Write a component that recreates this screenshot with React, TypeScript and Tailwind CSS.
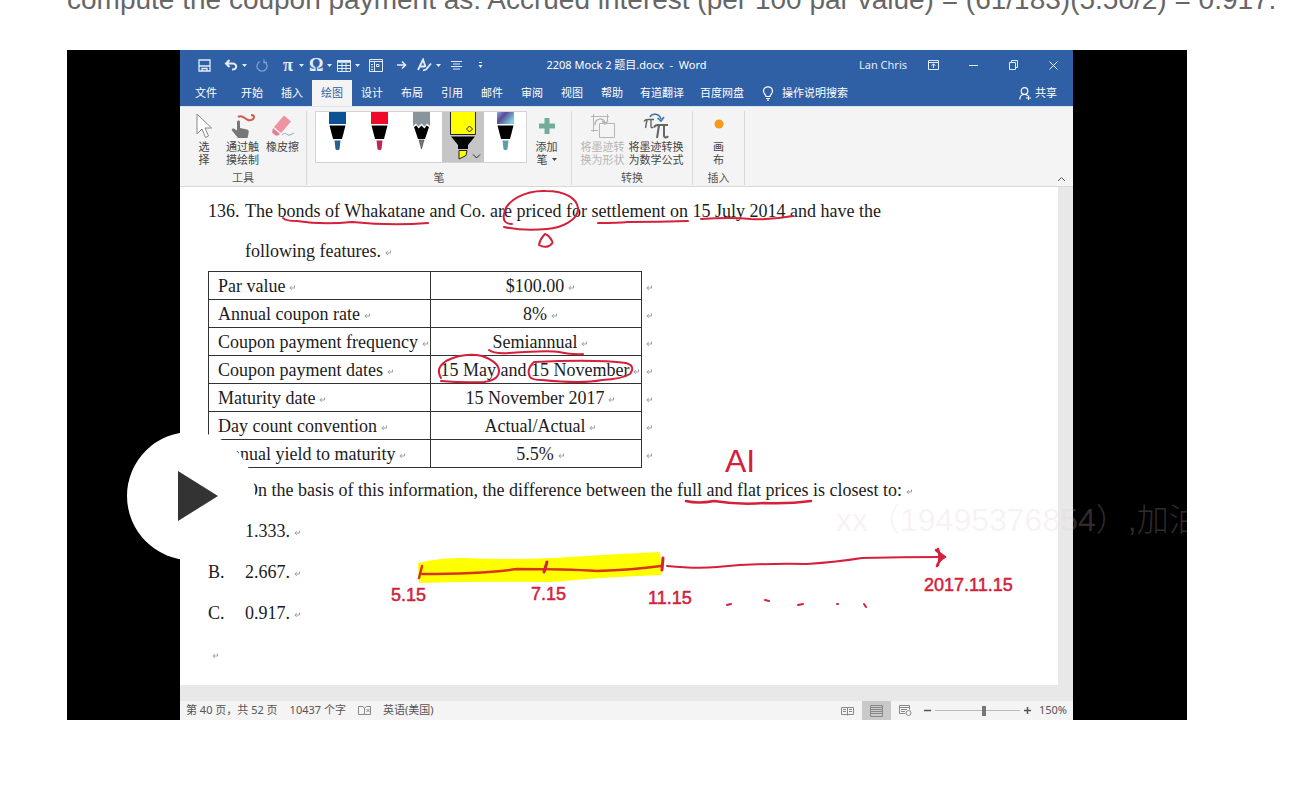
import type { ReactNode } from "react";
import clsx from "clsx";

const TABS = ["开始", "插入", "绘图", "设计", "布局", "引用", "邮件", "审阅", "视图", "帮助"];
const ADDIN_TABS = ["有道翻译", "百度网盘"];

const FEATURES = [
    ["Par value", "$100.00"],
    ["Annual coupon rate", "8%"],
    ["Coupon payment frequency", "Semiannual"],
    ["Coupon payment dates", "15 May and 15 November"],
    ["Maturity date", "15 November 2017"],
    ["Day count convention", "Actual/Actual"],
    ["Annual yield to maturity", "5.5%"],
];

const OPTIONS = [
    ["A.", "1.333."],
    ["B.", "2.667."],
    ["C.", "0.917."],
];

function Caret() {
    return (
        <svg width="5" height="3" viewBox="0 0 5 3" fill="currentColor" aria-hidden="true">
            <path d="M0 0h5L2.5 3z" />
        </svg>
    );
}

function ParagraphMark() {
    return (
        <svg
            width="6"
            height="6"
            viewBox="0 0 6 6"
            fill="none"
            stroke="#a0a0a0"
            aria-hidden="true"
            className="ml-1 inline-block"
        >
            <path d="M5.500 0.500v2.500h-4.500M2.800 1.200L0.800 3l2 1.800" />
        </svg>
    );
}

function ToolButton({
    label,
    className,
    caret,
    children,
}: {
    label: string;
    className: string;
    caret?: boolean;
    children: ReactNode;
}) {
    return (
        <button aria-label={label} className={clsx("flex h-5 items-center gap-1", className)}>
            {children}
            {caret && <Caret />}
        </button>
    );
}

function TitleBar() {
    return (
        <div className="flex h-[30px] items-center text-white">
            <div className="flex flex-1 items-center text-[#e3edf9]">
                <ToolButton label="保存" className="ml-[18px] w-[26px]">
                    <svg width="13" height="13" viewBox="0 0 13 13" fill="none" stroke="currentColor" strokeWidth="1.300">
                        <path d="M1 1h11v11H1zM1 7h11M4 12V9.500h5V12" />
                    </svg>
                </ToolButton>
                <ToolButton label="撤消" className="w-8" caret>
                    <svg width="14" height="12" viewBox="0 0 14 12" fill="none" stroke="currentColor" strokeWidth="2">
                        <path d="M5.500 1L2 4.500 5.500 8M2 4.500h6.500c5 0 5 6-0.500 6" />
                    </svg>
                </ToolButton>
                <ToolButton label="恢复" className="w-[25px] text-[#7f9fce]">
                    <svg width="12" height="13" viewBox="0 0 12 13" fill="none" stroke="currentColor" strokeWidth="1.300">
                        <path d="M8 2.500a5 5 0 1 1-4 0M8 0.500v3h3" />
                    </svg>
                </ToolButton>
                <ToolButton label="公式" className="w-7" caret>
                    <span className="w-[14px] font-['Liberation_Serif',serif] text-[18px] leading-5 font-bold">π</span>
                </ToolButton>
                <ToolButton label="符号" className="w-7" caret>
                    <span className="w-[14px] font-['Liberation_Serif',serif] text-[18px] leading-5 font-bold">Ω</span>
                </ToolButton>
                <ToolButton label="表格" className="w-8" caret>
                    <svg width="14" height="13" viewBox="0 0 14 13" fill="none" stroke="currentColor">
                        <path d="M0.500 1.500h13v11H0.500zM0.500 6.500h13M0.500 9.500h13M5 4v8.500M9 4v8.500" />
                        <path d="M0.500 2.500h13" strokeWidth="2.500" />
                    </svg>
                </ToolButton>
                <ToolButton label="窗格" className="w-[27px]">
                    <svg width="14" height="13" viewBox="0 0 14 13" fill="none" stroke="currentColor">
                        <path d="M0.500 0.500h13v12H0.500zM0.500 2.500h13M5.500 3v9.500M2 5.500h2M2 8h2M2 10.500h2M7.500 5.500h2.500v2H7.500z" />
                    </svg>
                </ToolButton>
                <ToolButton label="下一处" className="w-[21px]">
                    <svg width="11" height="10" viewBox="0 0 11 10" fill="none" stroke="currentColor" strokeWidth="1.600">
                        <path d="M1 5h8.500M6 1.500L9.500 5 6 8.500" />
                    </svg>
                </ToolButton>
                <ToolButton label="文本效果" className="w-[33px]" caret>
                    <svg width="15" height="14" viewBox="0 0 15 14" fill="none" stroke="currentColor" strokeWidth="1.800">
                        <path d="M1 12L6 1.500 8.500 9M3 8.500h5M6 12.500l3-1 5-6" />
                    </svg>
                </ToolButton>
                <ToolButton label="居中" className="w-7">
                    <svg width="13" height="10" viewBox="0 0 13 10" fill="none" stroke="currentColor">
                        <path d="M1 1.500h11M3 4h7M1 6.500h11M3 9h7" />
                    </svg>
                </ToolButton>
                <ToolButton label="自定义快速访问工具栏" className="w-2">
                    <svg width="5" height="6" viewBox="0 0 5 6" fill="currentColor">
                        <path d="M1 0h3v1H1zM0.500 3h4l-2 3z" />
                    </svg>
                </ToolButton>
            </div>
            <h1 className="text-[11px] whitespace-pre">2208 Mock 2 题目.docx  -  Word</h1>
            <div className="flex flex-1 items-center justify-end text-[#e3edf9]">
                <span className="mr-1.5 text-[11px]">Lan Chris</span>
                <button aria-label="功能区显示选项" className="flex h-5 w-10 items-center justify-center">
                    <svg width="11" height="10" viewBox="0 0 11 10" fill="none" stroke="currentColor">
                        <path d="M0.500 0.500h10v9H0.500zM0.500 2.500h10M5.500 8V4M3.500 5.500l2-1.500 2 1.500" />
                    </svg>
                </button>
                <button aria-label="最小化" className="flex h-5 w-10 items-center justify-center">
                    <svg width="9" height="1" viewBox="0 0 9 1" fill="currentColor">
                        <path d="M0 0h9v1H0z" />
                    </svg>
                </button>
                <button aria-label="还原" className="flex h-5 w-10 items-center justify-center">
                    <svg width="9" height="10" viewBox="0 0 9 10" fill="none" stroke="currentColor">
                        <path d="M0.500 2.500h6v7h-6zM2.500 2.500v-2h6v7h-2" />
                    </svg>
                </button>
                <button aria-label="关闭" className="flex h-5 w-10 items-center justify-center">
                    <svg width="9" height="9" viewBox="0 0 9 9" fill="none" stroke="currentColor">
                        <path d="M0.500 0.500l8 8M8.500 0.500l-8 8" />
                    </svg>
                </button>
            </div>
        </div>
    );
}

function TabBar() {
    return (
        <nav className="flex h-[27px] items-stretch border-b border-[#dbe5f2] pl-1.5 text-[11px] text-white">
            <button className="mr-1.5 px-[9px]">文件</button>
            {TABS.map((tab) => (
                <button key={tab} className={clsx("px-[9px]", tab === "绘图" && "bg-[#f4f4f4] text-[#2f5fa5]")}>
                    {tab}
                </button>
            ))}
            {ADDIN_TABS.map((tab) => (
                <button key={tab} className="px-2">
                    {tab}
                </button>
            ))}
            <button className="ml-2.5 flex items-center gap-2">
                <svg width="12" height="15" viewBox="0 0 12 15" fill="none" stroke="currentColor" strokeWidth="1.200">
                    <path d="M4 10.500C4 8.500 1.500 8 1.500 5a4.500 4.200 0 0 1 9 0c0 3-2.500 3.500-2.500 5.500zM4 12.500h4M5 14.200h2" />
                </svg>
                操作说明搜索
            </button>
            <button className="mr-4 ml-auto flex items-center gap-1">
                <svg width="12" height="13" viewBox="0 0 12 13" fill="none" stroke="currentColor" strokeWidth="1.200">
                    <circle cx="5.500" cy="4" r="3.300" />
                    <path d="M0.800 12.500c0-3.500 2-5 4.700-5 1.500 0 2.500 0.500 3.200 1.200M7 11h5M9.500 8.500v5" />
                </svg>
                共享
            </button>
        </nav>
    );
}

function Pen({ color, tip }: { color: string; tip: string }) {
    return (
        <svg width="42" height="50" viewBox="0 0 42 50" aria-hidden="true">
            <path d="M13 0h17v12H13z" fill={color} />
            <path d="M13.500 13.500h16L26 27h-9z" fill="#000" />
            <path d="M18.500 28.500h6l-1 8.500c-0.500 1.500-3.500 1.500-4 0z" fill={tip} />
        </svg>
    );
}

function PenGallery() {
    return (
        <div className="flex h-[52px] border border-[#d4d4d4] bg-white">
            <button aria-label="蓝色笔">
                <Pen color="#0b5394" tip="#24608f" />
            </button>
            <button aria-label="红色笔">
                <Pen color="#ee0a28" tip="#c2264d" />
            </button>
            <button aria-label="铅笔">
                <svg width="42" height="50" viewBox="0 0 42 50" aria-hidden="true">
                    <path d="M13 0h17v14l-3-2.500-2.500 3-3-3-3 3-2.500-3L13 14z" fill="#8a949b" />
                    <path d="M14 15l2.500-1.500 2 3 3-3 3 3 2-3L29 15l-4 12h-7z" fill="#000" />
                    <path d="M19 28h5l-2.500 9z" fill="#777" stroke="#333" strokeWidth="0.500" />
                </svg>
            </button>
            <button aria-label="荧光笔" className="bg-[#c6c6c6]">
                <svg width="42" height="50" viewBox="0 0 42 50" aria-hidden="true">
                    <path d="M8.500 0v22.500h25V0" fill="#ffff00" stroke="#222" />
                    <path d="M9 24.500h24l-7 8.500v4H16v-4z" fill="#000" />
                    <path d="M17 38.500h8l-1 5-7 3.500z" fill="#ffff00" stroke="#222" />
                    <path d="M27.500 14l3 3-3 3-3-3zM31 42.500l3.500 3.500 3.500-3.500" fill="none" stroke="#222" />
                </svg>
            </button>
            <button aria-label="星系笔">
                <svg width="42" height="50" viewBox="0 0 42 50" aria-hidden="true">
                    <defs>
                        <linearGradient id="galaxy" x1="0" y1="0" x2="1" y2="0.600">
                            <stop offset="0" stopColor="#7ab8d8" />
                            <stop offset="0.400" stopColor="#5a4a98" />
                            <stop offset="1" stopColor="#7fd0e0" />
                        </linearGradient>
                    </defs>
                    <path d="M13 0h17v12H13z" fill="url(#galaxy)" />
                    <path d="M13.500 13.500h16L26 27h-9z" fill="#000" />
                    <path d="M18.500 28.500h6l-1 8.500c-0.500 1.500-3.500 1.500-4 0z" fill="#5f9ea8" />
                </svg>
            </button>
        </div>
    );
}

function RibbonButton({ lines, disabled, children }: { lines: ReactNode[]; disabled?: boolean; children: ReactNode }) {
    return (
        <button
            disabled={disabled}
            className={clsx("flex flex-col items-center", disabled ? "text-[#b4b4b4]" : "text-[#444]")}
        >
            <span className="flex h-[29px] items-center">{children}</span>
            {lines.map((line, i) => (
                <span key={i} className="flex items-center gap-1 whitespace-nowrap">
                    {line}
                </span>
            ))}
        </button>
    );
}

function RibbonGroup({ name, className, children }: { name: string; className: string; children: ReactNode }) {
    return (
        <section className={clsx("mt-1 mb-px flex flex-col justify-between border-r border-[#d8d8d8]", className)}>
            <div className="flex h-14 items-start justify-center">{children}</div>
            <h2 className="text-center leading-[15px] text-[#555]">{name}</h2>
        </section>
    );
}

function Ribbon() {
    return (
        <div className="flex h-20 border-b border-[#d8d8d8] bg-[#f4f4f4] text-[11px] leading-[13px]">
            <RibbonGroup name="工具" className="w-[127px]">
                <div className="flex items-start gap-[7px] pl-2">
                    <div className="w-6">
                        <RibbonButton lines={["选", "择"]}>
                            <svg width="18" height="26" viewBox="0 0 18 26" fill="#fff" stroke="#888">
                                <path d="M2 1v20l5-5 3.500 8.500 3-1.500-3.500-8h6.500z" />
                            </svg>
                        </RibbonButton>
                    </div>
                    <RibbonButton lines={["通过触", "摸绘制"]}>
                        <svg width="26" height="26" viewBox="0 0 26 26">
                            <path
                                d="M7 9c0-2 3-2 3 0v6l7 1.500c2 0.500 2 2 1.500 4l-1 4.500H8L2 17.500c-1-1.500 1-2.500 2.500-1.500L7 17.500z"
                                fill="#777"
                            />
                            <path
                                d="M8 4c4-3 7 2 10 3s6-1 6-3-2-2-3-2"
                                fill="none"
                                stroke="#cf5846"
                                strokeWidth="2"
                            />
                        </svg>
                    </RibbonButton>
                    <RibbonButton lines={["橡皮擦"]}>
                        <svg width="26" height="26" viewBox="0 0 26 26">
                            <path d="M14 2.500l7 6L11 20l-7-6z" fill="#ec92a0" />
                            <path d="M3 15l7 6-2 1.500H5.500L2 19.500z" fill="#e57f90" />
                            <path d="M12 22c4-4 5 1 8 0l4-2" fill="none" stroke="#8fa7c4" />
                        </svg>
                    </RibbonButton>
                </div>
            </RibbonGroup>
            <RibbonGroup name="笔" className="w-[265px]">
                <div className="flex items-start gap-[9px] pr-1.5">
                    <PenGallery />
                    <RibbonButton
                        lines={[
                            "添加",
                            <>
                                笔 <Caret />
                            </>,
                        ]}
                    >
                        <svg width="18" height="18" viewBox="0 0 18 18" fill="#72ae97">
                            <path d="M6.500 1h5v5.500H17v5h-5.500V17h-5v-5.500H1v-5h5.500z" />
                        </svg>
                    </RibbonButton>
                </div>
            </RibbonGroup>
            <RibbonGroup name="转换" className="w-[121px]">
                <div className="flex gap-1">
                    <RibbonButton lines={["将墨迹转", "换为形状"]} disabled>
                        <svg width="26" height="26" viewBox="0 0 26 26" fill="none" stroke="#b4b4b4">
                            <path d="M1 3.500h18M3.500 1v18M17.500 1v7M1 17.500h7M9.500 10.500h15v14h-15z" />
                            <path d="M5 12c0-7 9-8 10-2M12 8l3 3 3-3" strokeWidth="1.500" />
                        </svg>
                    </RibbonButton>
                    <RibbonButton lines={["将墨迹转换", "为数学公式"]}>
                        <svg width="28" height="28" viewBox="0 0 28 28" fill="none">
                            <path d="M2 9.500c1-2 2-2 4-2h6M5 8l-1.500 8M9 8v6.500c0 1.500 1.500 1.500 2 0.500" stroke="#666" strokeWidth="1.400" />
                            <path d="M12 15.500c1-2.500 2-2.500 4-2.500h10M17 13.500L15 26M22 13v10.500c0 2.500 3 2.500 4 0.500" stroke="#666" strokeWidth="2" />
                            <path d="M8 5c2-4 9-4 11 2M15.500 6l3.500 3 3-4" stroke="#3f75ad" strokeWidth="1.600" />
                        </svg>
                    </RibbonButton>
                </div>
            </RibbonGroup>
            <RibbonGroup name="插入" className="w-[52px]">
                <RibbonButton lines={["画", "布"]}>
                    <svg width="10" height="14" viewBox="0 0 10 14">
                        <circle cx="5" cy="5" r="4.500" fill="#f79a1c" />
                    </svg>
                </RibbonButton>
            </RibbonGroup>
            <button aria-label="折叠功能区" className="mt-auto mr-[7px] mb-1 ml-auto">
                <svg width="9" height="6" viewBox="0 0 9 6" fill="none" stroke="#555">
                    <path d="M1 5l3.500-3.500L8 5" />
                </svg>
            </button>
        </div>
    );
}

// Pen strokes laid over the page
function InkLayer() {
    return (
        <svg
            width="893"
            height="498"
            viewBox="180 187 893 498"
            fill="none"
            stroke="#d4203a"
            strokeWidth="2"
            strokeLinecap="round"
            strokeLinejoin="round"
            className="pointer-events-none absolute top-0 left-0"
        >
            <path
                d="M418 563q20-5 45-5q45 2 90 0q60-4 107-6l2 23q-60 2-110 7q-70-1-133 1z"
                fill="#ffff00"
                stroke="none"
            />
            <path d="M283 218q2 3 14 3q25 4 55 1q40 4 76 1" />
            <path d="M512 224q-10 0-8-10c2-14 22-24 42-23c20 0 31 8 32 17c1 12-17 20-31 21q-25 2-43-2" />
            <path d="M545 234q-5 5-6 11q5 3 10 1q5-3 3-5q-3-6-7-7" />
            <path d="M598 223q20 0 30-1q30 0 60-1" />
            <path d="M701 219q30-2 50 0q20 1 42-3" />
            <path d="M489 350q5 4 20 3q40-3 50-1q15 3 24 2" />
            <path d="M441 378q-6-10 5-17q18-9 36-5q17 6 17 15q0 9-15 11q-20 1-43-1" />
            <path d="M533 363q-7 7-3 14q2 3 12 3q40 4 60 0q20-1 28-6q6-8-4-11q-30-4-92-1" />
            <path d="M686 501q12 3 28 0q25 4 50 2q25 1 47-2" strokeWidth="2.500" />
            <path d="M422 574q60 0 95-5q50 0 80 2q35-1 64-5M422 566l-3 12" stroke="#d8341c" strokeWidth="2.500" />
            <path d="M547 562l-3 10M663 558l-1 12" strokeWidth="3" />
            <path d="M667 566q30 3 50 1q40-4 90-3q30-2 55-6q40-1 80-1" />
            <path d="M938 549q3 8 0 16M936 550q4 4 9 7q-6 3-8 9" strokeWidth="2.500" />
            <path d="M727 605l4-1M765 600l4 1M798 605l5-1M837 604l1 0M864 604l2 3" />
            <g fill="#d4203a" strokeWidth="0.500" fontSize="18" fontFamily="'Liberation Sans', sans-serif">
                <text x="391" y="601">5.15</text>
                <text x="531" y="600">7.15</text>
                <text x="648" y="604">11.15</text>
                <text x="924" y="591">2017.11.15</text>
                <text x="725" y="472" fontSize="32" strokeWidth="0">AI</text>
            </g>
        </svg>
    );
}

function DocumentPage() {
    return (
        <article className="relative bg-[#e8e8e8] pr-[15px] font-['Liberation_Serif',serif] text-[18px] text-[#1c1c1c]">
            <div className="bg-white pt-1 pb-[10px] pl-7">
                <div className="flex leading-10">
                    <span className="w-[37px]">136.</span>
                    <p>
                        The bonds of Whakatane and Co. are priced for settlement on 15 July 2014 and have the
                        <br />
                        following features.
                        <ParagraphMark />
                    </p>
                </div>
                <table className="mb-0.5 border-collapse leading-[25px]">
                    <tbody>
                        {FEATURES.map(([label, value]) => (
                            <tr key={label}>
                                <th
                                    scope="row"
                                    className="w-[222px] border border-[#333] pt-0.5 pl-[9px] text-left font-normal whitespace-nowrap"
                                >
                                    {label}
                                    <ParagraphMark />
                                </th>
                                <td className="w-[211px] border border-[#333] pt-0.5 pl-2 text-center whitespace-nowrap">
                                    {value}
                                    <ParagraphMark />
                                </td>
                                <td className="pt-0.5">
                                    <ParagraphMark />
                                </td>
                            </tr>
                        ))}
                    </tbody>
                </table>
                <div className="leading-[41px]">
                    <p className="pl-[37px]">
                        On the basis of this information, the difference between the full and flat prices is closest
                        to:
                        <ParagraphMark />
                    </p>
                    <ol>
                        {OPTIONS.map(([letter, value]) => (
                            <li key={letter} className="flex">
                                <span className="w-[37px]">{letter}</span>
                                <span>
                                    {value}
                                    <ParagraphMark />
                                </span>
                            </li>
                        ))}
                    </ol>
                    <p>
                        <ParagraphMark />
                    </p>
                </div>
            </div>
            <InkLayer />
        </article>
    );
}

function StatusBar() {
    return (
        <footer className="flex h-[19px] items-center bg-[#f4f4f4] px-1.5 text-[11px] text-[#555]">
            <span className="mr-3">第 40 页，共 52 页</span>
            <span className="mr-3">10437 个字</span>
            <svg width="13" height="11" viewBox="0 0 13 11" fill="none" stroke="#888" className="mr-3">
                <path d="M6.500 9.500H0.500v-8h4l2 1.500zM6.500 3l2-1.500h4v8h-6M8.500 4l3 3M11.500 4l-3 3" />
            </svg>
            <span>英语(美国)</span>
            <div className="ml-auto flex h-full items-center">
                <button aria-label="阅读视图" className="flex h-full w-[29px] items-center justify-center">
                    <svg width="13" height="10" viewBox="0 0 13 10" fill="none" stroke="#888">
                        <path d="M6.500 9.500V1.500M6.500 1.500h-6v7h6M6.500 1.500h6v7h-6M2 3.500h3M2 5.500h3M8 3.500h3M8 5.500h3" />
                    </svg>
                </button>
                <button
                    aria-label="页面视图"
                    className="flex h-full w-[29px] items-center justify-center bg-[#c9c9c9]"
                >
                    <svg width="13" height="12" viewBox="0 0 13 12" fill="none" stroke="#888">
                        <path d="M0.500 0.500h12v11H0.500zM1 2.500h11M1 4.500h11M1 6.500h11M1 8.500h11" />
                    </svg>
                </button>
                <button aria-label="Web 版式视图" className="flex h-full w-[29px] items-center justify-center">
                    <svg width="13" height="11" viewBox="0 0 13 11" fill="none" stroke="#888">
                        <path d="M6 8.500H0.500v-8h10v4M0.500 2.500h10M2 4.500h6M2 6.500h4" />
                        <circle cx="9.500" cy="8" r="2.500" />
                    </svg>
                </button>
                <button aria-label="缩小" className="mr-1 ml-1">
                    <svg width="7" height="7" viewBox="0 0 7 7" stroke="#555" strokeWidth="1.500">
                        <path d="M0 3.500h7" />
                    </svg>
                </button>
                <input
                    type="range"
                    aria-label="显示比例"
                    min={0}
                    max={100}
                    defaultValue={58}
                    className="h-[10px] w-[85px] appearance-none bg-transparent [&::-webkit-slider-runnable-track]:h-px [&::-webkit-slider-runnable-track]:bg-[#bbb] [&::-webkit-slider-thumb]:-mt-1 [&::-webkit-slider-thumb]:h-[10px] [&::-webkit-slider-thumb]:w-1 [&::-webkit-slider-thumb]:appearance-none [&::-webkit-slider-thumb]:bg-[#777]"
                />
                <button aria-label="放大" className="mr-2 ml-1">
                    <svg width="7" height="7" viewBox="0 0 7 7" stroke="#555" strokeWidth="1.500">
                        <path d="M0 3.500h7M3.500 0v7" />
                    </svg>
                </button>
                <span>150%</span>
            </div>
        </footer>
    );
}

function App() {
    return (
        <main className="overflow-hidden bg-white">
            <div className="flex h-[50px] items-start pl-[67px]">
                <p className="-mt-[18px] font-['Liberation_Sans',sans-serif] text-[28px] leading-9 whitespace-nowrap text-[#666]">
                    compute the coupon payment as: Accrued interest (per 100 par value) = (61/183)(5.50/2) = 0.917.
                </p>
            </div>
            <div className="relative mr-[103px] ml-[67px] overflow-hidden bg-black pr-[114px] pl-[113px]">
                <div className="bg-[#2f5fa5] font-['Noto_Sans','Noto_Sans_CJK_SC',sans-serif]">
                    <TitleBar />
                    <TabBar />
                    <Ribbon />
                    <DocumentPage />
                    <div className="h-4 bg-[#e8e8e8]" />
                    <StatusBar />
                </div>
                <p className="pointer-events-none absolute top-[450px] left-[769px] font-['Liberation_Sans','Noto_Sans_CJK_SC',sans-serif] text-[32px] leading-10 font-light whitespace-nowrap text-[#e1c8cd]/22">
                    xx（19495376854）,加油
                </p>
                <button
                    aria-label="播放"
                    className="absolute top-[382px] left-[60px] flex size-32 items-center justify-center rounded-full bg-white pl-[14px]"
                >
                    <svg width="40" height="50" viewBox="0 0 40 50" fill="#333">
                        <path d="M0 0l40 25L0 50z" />
                    </svg>
                </button>
            </div>
        </main>
    );
}

export default App;
